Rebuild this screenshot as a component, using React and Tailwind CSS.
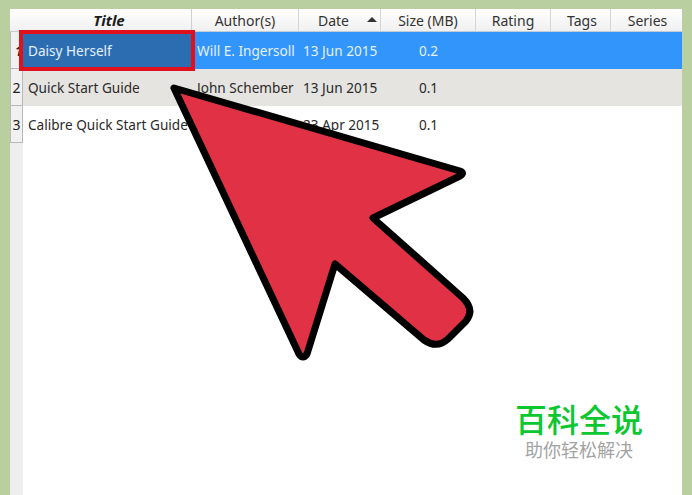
const columns = [
  { label: 'Author(s)', width: 'w-[107px]' },
  { label: 'Date', width: 'w-[82px] pr-[12px]', sorted: true },
  { label: 'Size (MB)', width: 'w-[95px]' },
  { label: 'Rating', width: 'w-[75px]' },
  { label: 'Tags', width: 'w-[60px] pl-[3px]' },
  { label: 'Series', width: 'flex-1 pl-[2px]' },
];

const rows = [
  { num: '1', title: 'Daisy Herself', author: 'Will E. Ingersoll', date: '13 Jun 2015', size: '0.2', bg: 'bg-[#3295fb] text-[#e4f1ff]', selected: true },
  { num: '2', title: 'Quick Start Guide', author: 'John Schember', date: '13 Jun 2015', size: '0.1', bg: 'bg-[#e5e4e0] text-[#2a2a2a]' },
  { num: '3', title: 'Calibre Quick Start Guide', author: '', date: '23 Apr 2015', size: '0.1', bg: 'bg-white text-[#2a2a2a]' },
];

const Header = () => (
  <div className="flex h-[23px] bg-gradient-to-b from-white to-[#f0f0f0] border-b border-[#c4ccd4] text-[14px] text-[#333]">
    <div className="w-[182px] shrink-0 flex items-center justify-center pl-[17px] border-r border-[#cfcfcf] italic font-bold text-[15px] text-[#1c1c1c]">
      Title
    </div>
    {columns.map((col) => (
      <div
        key={col.label}
        className={`${col.width} relative flex items-center justify-center border-r border-[#d6d6d6] last:border-r-0`}
      >
        {col.label}
        {col.sorted && (
          <span className="absolute right-[3px] top-[8px] w-0 h-0 border-x-[5px] border-x-transparent border-b-[5px] border-b-[#333]" />
        )}
      </div>
    ))}
  </div>
);

const Row = ({ row }) => (
  <div className={`flex h-[37px] items-center pt-0 text-[13.6px] ${row.bg}`}>
    <div
      className={`w-[13px] h-full shrink-0 flex items-center pt-[1px] bg-[#f1f1f1] border-x border-b border-[#b9b9b9] text-[14px] text-[#222] ${row.selected ? 'font-bold italic pl-[4px]' : 'justify-center'}`}
    >
      {row.num}
    </div>
    <div className="w-[169px] shrink-0 h-full flex items-center pl-[5px] pt-[1px] whitespace-nowrap relative">
      {row.selected && (
        <div className="absolute left-[-4px] right-[-3px] top-[-2px] bottom-[-2px] border-[4px] border-[#e0101c] bg-[#2c6db2]" />
      )}
      <span className="relative">{row.title}</span>
    </div>
    <div className="w-[107px] shrink-0 pl-[5px] pt-[1px] whitespace-nowrap">{row.author}</div>
    <div className="w-[82px] shrink-0 pl-[4px] pt-[1px] whitespace-nowrap">{row.date}</div>
    <div className="w-[95px] shrink-0 pt-[1px] text-center">{row.size}</div>
  </div>
);

const Arrow = () => (
  <svg className="absolute left-0 top-0" width="692" height="495" viewBox="0 0 692 495">
    <path
      d="M174 88 L460 171 Q465 173 460 176 L373 218 L463 298 Q475 310 466 321 L448 339 Q437 349 424 340 L335 264 L307 354 Q303 360 299 354 Z"
      fill="#e03244"
      stroke="#000"
      strokeWidth="7"
      strokeLinejoin="round"
    />
  </svg>
);

export default function App() {
  return (
    <div
      className="relative w-[692px] h-[495px] overflow-hidden bg-[#b9cfa0] pt-[9px] pl-[10px] pr-[10px]"
      style={{ fontFamily: '"Noto Sans", "Noto Sans CJK SC", sans-serif' }}
    >
      <div className="h-full bg-white flex flex-col">
        <Header />
        {rows.map((row) => (
          <Row key={row.num} row={row} />
        ))}
        <div className="flex-1 flex">
          <div className="w-[13px] bg-[#eeeeee]" />
        </div>
      </div>
      <Arrow />
      <div className="absolute left-[514px] top-[403px] w-[130px] flex flex-col items-center gap-[2px]">
        <div className="text-[32px] leading-[34px] font-medium text-[#0cc72f]">百科全说</div>
        <div className="text-[18px] leading-[22px] text-[#a3a3a3]">助你轻松解决</div>
      </div>
    </div>
  );
}
